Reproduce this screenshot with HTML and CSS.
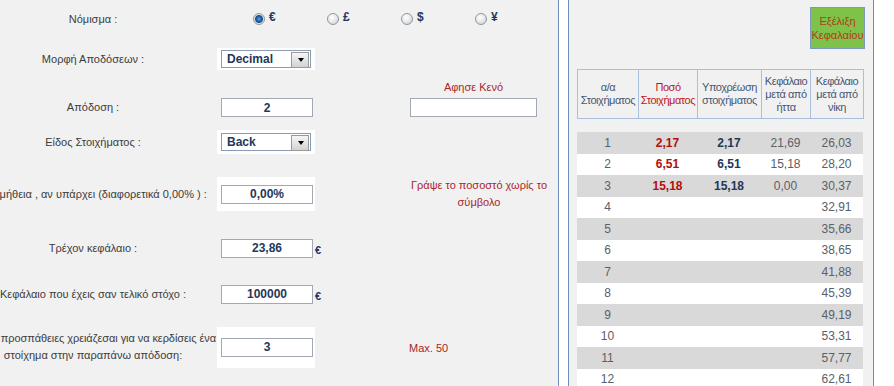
FILE: index.html
```html
<!DOCTYPE html>
<html lang="el">
  <head>
    <meta charset="UTF-8" />
    <link rel="stylesheet" href="styles.css">
    <title>Εξέλιξη Κεφαλαίου</title>
  </head>
  <body>
    <div class="page">
      <div class="calc">
        <div class="row row-currency">
          <div class="label">Νόμισμα :</div>
          <div class="currencies">
            <label class="cur"><input type="radio" name="cur" checked><span>€</span></label>
            <label class="cur"><input type="radio" name="cur"><span>£</span></label>
            <label class="cur"><input type="radio" name="cur"><span>$</span></label>
            <label class="cur"><input type="radio" name="cur"><span>¥</span></label>
          </div>
        </div>

        <div class="row row-format">
          <div class="label">Μορφή Αποδόσεων :</div>
          <div class="cell white h22">
            <span class="select"><select><option>Decimal</option><option>Fractional</option></select></span>
          </div>
        </div>

        <div class="row row-odds">
          <div class="label">Απόδοση :</div>
          <div class="cell"><input class="field" type="text" value="2"></div>
          <div></div>
          <div class="note-field">
            <div class="hint">Αφησε Κενό</div>
            <input class="field wide" type="text" value="">
          </div>
        </div>

        <div class="row row-type">
          <div class="label">Είδος Στοιχήματος :</div>
          <div class="cell white h24">
            <span class="select"><select><option>Back</option><option>Lay</option></select></span>
          </div>
        </div>

        <div class="row row-comm">
          <div class="label">Προμήθεια , αν υπάρχει (διαφορετικά 0,00% ) :</div>
          <div class="cell white h34"><input class="field" type="text" value="0,00%"></div>
          <div></div>
          <div class="note">Γράψε το ποσοστό χωρίς το σύμβολο</div>
        </div>

        <div class="row row-current">
          <div class="label">Τρέχον κεφάλαιο :</div>
          <div class="cell"><input class="field" type="text" value="23,86"></div>
          <div class="euro">€</div>
        </div>

        <div class="row row-target">
          <div class="label">Κεφάλαιο που έχεις σαν τελικό στόχο :</div>
          <div class="cell"><input class="field" type="text" value="100000"></div>
          <div class="euro">€</div>
        </div>

        <div class="row row-tries">
          <div class="label">
            <div class="line-end"><span>Πόσες προσπάθειες χρειάζεσαι για να κερδίσεις ένα</span></div>
            <div>στοίχημα στην παραπάνω απόδοση:</div>
          </div>
          <div class="cell white h41"><input class="field" type="text" value="3"></div>
          <div></div>
          <div class="note left">Max. 50</div>
        </div>
      </div>

      <div class="side">
        <div class="side-top">
          <button class="btn-growth" type="button">Εξέλιξη<br>Κεφαλαίου</button>
        </div>

        <table class="grid head">
          <colgroup><col class="c1"><col class="c2"><col class="c3"><col class="c4"><col class="c5"></colgroup>
          <tr>
            <th>α/α<br>Στοιχήματος</th>
            <th class="red">Ποσό<br>Στοιχήματος</th>
            <th>Υποχρέωση<br>στοιχήματος</th>
            <th>Κεφάλαιο<br>μετά από<br>ήττα</th>
            <th>Κεφάλαιο<br>μετά από<br>νίκη</th>
          </tr>
        </table>

        <table class="grid steps">
          <colgroup><col class="c1"><col class="c2"><col class="c3"><col class="c4"><col class="c5"></colgroup>
          <tr><td>1</td><td class="stake">2,17</td><td class="liab">2,17</td><td>21,69</td><td>26,03</td></tr>
          <tr><td>2</td><td class="stake">6,51</td><td class="liab">6,51</td><td>15,18</td><td>28,20</td></tr>
          <tr><td>3</td><td class="stake">15,18</td><td class="liab">15,18</td><td>0,00</td><td>30,37</td></tr>
          <tr><td>4</td><td></td><td></td><td></td><td>32,91</td></tr>
          <tr><td>5</td><td></td><td></td><td></td><td>35,66</td></tr>
          <tr><td>6</td><td></td><td></td><td></td><td>38,65</td></tr>
          <tr><td>7</td><td></td><td></td><td></td><td>41,88</td></tr>
          <tr><td>8</td><td></td><td></td><td></td><td>45,39</td></tr>
          <tr><td>9</td><td></td><td></td><td></td><td>49,19</td></tr>
          <tr><td>10</td><td></td><td></td><td></td><td>53,31</td></tr>
          <tr><td>11</td><td></td><td></td><td></td><td>57,77</td></tr>
          <tr><td>12</td><td></td><td></td><td></td><td>62,61</td></tr>
        </table>
      </div>
    </div>
  </body>
</html>
```

FILE: styles.css
```css
* {
  box-sizing: border-box;
}
body {
  margin: 0;
  background: #fff;
  font-family: "Liberation Sans", Arial, sans-serif;
  font-size: 11px;
  color: #3c3c3c;
}
.page {
  display: flex;
  height: 386px;
  overflow: hidden;
}

/* left form */
.calc {
  flex: none;
  width: 559px;
  background: #f1f1f1;
  border-right: 1px solid #6f8fc0;
  overflow: hidden;
}
.row {
  display: grid;
  grid-template-columns: 248px 98px 94px 140px;
  align-items: center;
  margin-left: -31px;
}
.row-currency { height: 38px; }
.row-format { height: 42px; }
.row-odds { height: 42px; }
.row-type { height: 40px; }
.row-comm { height: 64px; }
.row-current { height: 44px; }
.row-target { height: 48px; }
.row-tries { height: 58px; }

.label {
  text-align: center;
  line-height: 17px;
}
.line-end {
  display: flex;
  justify-content: flex-end;
  white-space: nowrap;
  padding-right: 1px;
  letter-spacing: -0.07px;
}
.cell {
  display: flex;
  align-items: center;
  padding-left: 4px;
}
.white {
  background: #fff;
}
.h22 { height: 22px; }
.h24 { height: 24px; }
.h34 { height: 34px; }
.h41 { height: 41px; }

.field {
  width: 92px;
  height: 19px;
  border: 1px solid #a3a9b3;
  background: #fff;
  font: bold 12px "Liberation Sans", Arial, sans-serif;
  color: #24375a;
  text-align: center;
  padding: 0;
}
.field.wide {
  width: 127px;
}
.euro {
  color: #24375a;
  font-size: 11px;
  font-weight: bold;
  padding-top: 3px;
}

/* currency radios */
.currencies {
  grid-column: 2 / 5;
  display: flex;
  padding-left: 36px;
}
.cur {
  width: 78px;
  display: flex;
  align-items: flex-start;
}
.cur input {
  appearance: none;
  margin: 0;
  width: 12px;
  height: 12px;
  border-radius: 50%;
  border: 1px solid #8c98a6;
  background: radial-gradient(circle at 40% 35%, #fff 0, #e8e8e8 50%, #c4c4c4 100%);
}
.cur input:checked {
  background: radial-gradient(circle at 50% 50%, #5fa0d8 0, #1f5fa8 2.5px, #1a4f8c 3.5px, #e6e6e6 4.5px, #c4c4c4 100%);
}
.cur span {
  margin-left: 4px;
  margin-top: -3px;
  font: bold 12px "Liberation Sans", Arial, sans-serif;
  color: #24375a;
}

/* xp style select */
.select {
  position: relative;
  display: inline-block;
  width: 90px;
  height: 18px;
}
.select select {
  appearance: none;
  width: 100%;
  height: 100%;
  margin: 0;
  border: 1px solid #8a9cb3;
  background: #fff;
  font: bold 12px "Liberation Sans", Arial, sans-serif;
  color: #24375a;
  padding: 0 0 0 5px;
}
.select::after {
  content: "";
  position: absolute;
  right: 2px;
  top: 2px;
  width: 16px;
  height: 14px;
  border: 1px solid #9a9a9a;
  background: linear-gradient(#f6f6f6, #d2d2d2);
  pointer-events: none;
}
.select::before {
  content: "";
  position: absolute;
  right: 7px;
  top: 8px;
  border-left: 3.5px solid transparent;
  border-right: 3.5px solid transparent;
  border-top: 4px solid #000;
  z-index: 1;
  pointer-events: none;
}

/* notes */
.note,
.hint {
  color: #a8262a;
  text-align: center;
  line-height: 17px;
}
.note.left {
  text-align: left;
  padding-top: 2px;
}
.note-field {
  display: flex;
  flex-direction: column;
  align-items: flex-start;
  padding-bottom: 18px;
  padding-left: 1px;
}
.hint {
  width: 127px;
  line-height: 14px;
  margin-bottom: 4px;
}

/* right panel */
.side {
  flex: none;
  width: 306px;
  margin-left: 9px;
  background: #f1f1f1;
  border-left: 1px solid #6f8fc0;
  border-right: 1px solid #6f8fc0;
  padding: 7px 9px 0 8px;
}
.side-top {
  display: flex;
  justify-content: flex-end;
  margin-right: -1px;
}
.btn-growth {
  width: 55px;
  height: 42px;
  padding: 0;
  border: 1px solid #7a9bbf;
  background: #7fc24a;
  color: #b53a16;
  font: 11px/14px "Liberation Sans", Arial, sans-serif;
  cursor: pointer;
}
.grid {
  width: 286px;
  table-layout: fixed;
  border-collapse: collapse;
}
.c1 { width: 61px; }
.c2 { width: 59px; }
.c3 { width: 64px; }
.c4 { width: 49px; }
.c5 { width: 53px; }

.head {
  margin-top: 20px;
}
.head th {
  height: 49px;
  border: 1px solid #a9c0da;
  font-weight: normal;
  font-size: 11px;
  letter-spacing: -0.45px;
  line-height: 13px;
  color: #475874;
  padding: 0;
  white-space: nowrap;
  overflow: visible;
}
.head th.red {
  color: #c0141a;
}

.steps {
  margin-top: 13px;
}
.steps td {
  height: 21.5px;
  padding: 0;
  text-align: center;
  color: #5a606a;
  font-size: 12px;
}
.steps tr:nth-child(odd) td {
  background: #d9d9d9;
}
.steps tr:nth-child(even) td {
  background: #fff;
}
.steps td.stake {
  color: #b50d0d;
  font-weight: bold;
}
.steps td.liab {
  color: #24375a;
  font-weight: bold;
}
```
